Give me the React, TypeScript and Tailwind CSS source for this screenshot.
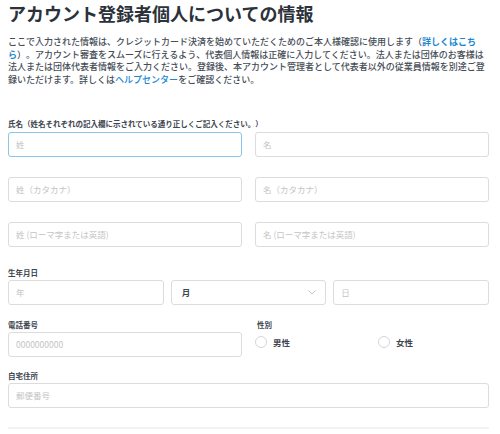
import React from "react";

const font = { fontFamily: '"Noto Sans CJK JP", "Noto Sans", sans-serif' };

function Input({ placeholder, focused }: { placeholder: string; focused?: boolean }) {
  return (
    <input
      readOnly
      placeholder={placeholder}
      className={
        focused
          ? "block w-full h-[25px] rounded-[3px] border border-[#8cc4e8] bg-white px-[7px] text-[8.5px] text-[#333] outline-none placeholder:text-[#c4c4c4] [text-spacing-trim:space-all]"
          : "block w-full h-[25px] rounded-[3px] border border-[#dcdcdc] bg-white px-[7px] text-[8.5px] text-[#333] outline-none placeholder:text-[#c4c4c4] [text-spacing-trim:space-all]"
      }
      style={font}
    />
  );
}

function Label({ children }: { children: React.ReactNode }) {
  return (
    <div className="text-[7.5px] leading-[10px] font-bold text-[#3e4651]">{children}</div>
  );
}

function Radio({ label }: { label: string }) {
  return (
    <div className="flex items-center gap-[6px]">
      <span className="block w-[12px] h-[12px] rounded-full border border-[#d6d6d6] bg-white" />
      <span className="text-[8.5px] font-bold text-[#3e4651]">{label}</span>
    </div>
  );
}

export default function App() {
  return (
    <div
      className="bg-white w-[500px] h-[434px] overflow-hidden [text-spacing-trim:space-all]"
      style={font}
    >
      <div className="ml-[8px] w-[481px]">
        <h1 className="pt-[2px] text-[18px] leading-[22px] font-bold text-[#2b323a]">
          アカウント登録者個人についての情報
        </h1>
        <p className="mt-[12px] text-[9px] leading-[12.7px] font-medium text-[#454d56]">
          ここで入力された情報は、クレジットカード決済を始めていただくためのご本人様確認に使用します（
          <span className="text-[#1b87cf] font-bold">詳しくはこちら</span>
          ）。アカウント審査をスムーズに行えるよう、代表個人情報は正確に入力してください。法人または団体のお客様は法人または団体代表者情報をご入力ください。登録後、本アカウント管理者として代表者以外の従業員情報を別途ご登録いただけます。詳しくは
          <span className="text-[#1b87cf]">ヘルプセンター</span>
          をご確認ください。
        </p>

        <div className="mt-[32px]">
          <Label>氏名（姓名それぞれの記入欄に示されている通り正しくご記入ください。）</Label>
        </div>
        <div className="mt-[3px] grid grid-cols-2 gap-x-[13px] gap-y-[20px]">
          <Input placeholder="姓" focused />
          <Input placeholder="名" />
          <Input placeholder="姓（カタカナ）" />
          <Input placeholder="名（カタカナ）" />
          <Input placeholder="姓 (ローマ字または英語)" />
          <Input placeholder="名 (ローマ字または英語)" />
        </div>

        <div className="mt-[21px]">
          <Label>生年月日</Label>
        </div>
        <div className="mt-[2px] grid grid-cols-3 gap-[7px]">
          <Input placeholder="年" />
          <div className="relative flex items-center h-[25px] rounded-[3px] border border-[#dcdcdc] bg-white pl-[10px]">
            <span className="text-[8.5px] font-bold text-[#3e4651]">月</span>
            <svg
              className="absolute right-[9px] top-[9px]"
              width="8"
              height="5"
              viewBox="0 0 8 5"
              fill="none"
            >
              <path d="M0.5 0.5 L4 4 L7.5 0.5" stroke="#b8b8b8" strokeWidth="0.8" />
            </svg>
          </div>
          <Input placeholder="日" />
        </div>

        <div className="mt-[15px] grid grid-cols-2 gap-x-[13px]">
          <div>
            <Label>電話番号</Label>
            <div className="mt-[2px]">
              <Input placeholder="0000000000" />
            </div>
          </div>
          <div>
            <div className="pl-[2px]">
              <Label>性別</Label>
            </div>
            <div className="mt-[6px] flex">
              <div className="w-[123px]">
                <Radio label="男性" />
              </div>
              <Radio label="女性" />
            </div>
          </div>
        </div>

        <div className="mt-[14px]">
          <Label>自宅住所</Label>
        </div>
        <div className="mt-[2px]">
          <Input placeholder="郵便番号" />
        </div>

        <div className="mt-[19px] h-[2px] bg-[#f2f2f2]" />
      </div>
    </div>
  );
}
